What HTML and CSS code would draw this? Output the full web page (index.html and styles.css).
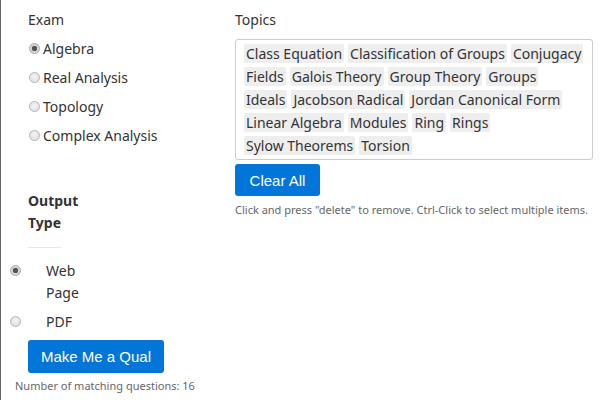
FILE: index.html
```html
<!DOCTYPE html>
<html>
<head>
<meta charset="utf-8">
<link rel="stylesheet" href="styles.css">
</head>
<body>
<div class="page">
  <div class="left">
    <div class="exam">
      <div class="label">Exam</div>
      <label class="radio-row"><input type="radio" name="exam" checked><span>Algebra</span></label>
      <label class="radio-row"><input type="radio" name="exam"><span>Real Analysis</span></label>
      <label class="radio-row"><input type="radio" name="exam"><span>Topology</span></label>
      <label class="radio-row"><input type="radio" name="exam"><span>Complex Analysis</span></label>
    </div>
    <div class="output">
      <div class="legend">Output Type</div>
      <hr class="rule">
      <label class="out-row"><input type="radio" name="out" checked><span class="out-text">Web Page</span></label>
      <label class="out-row"><input type="radio" name="out"><span class="out-text">PDF</span></label>
      <button class="btn btn-qual">Make Me a Qual</button>
      <div class="count">Number of matching questions: 16</div>
    </div>
  </div>
  <div class="right">
    <div class="label">Topics</div>
    <div class="tags">
      <span class="tag">Class Equation</span>
      <span class="tag">Classification of Groups</span>
      <span class="tag">Conjugacy</span>
      <span class="tag">Fields</span>
      <span class="tag">Galois Theory</span>
      <span class="tag">Group Theory</span>
      <span class="tag">Groups</span>
      <span class="tag">Ideals</span>
      <span class="tag">Jacobson Radical</span>
      <span class="tag">Jordan Canonical Form</span>
      <span class="tag">Linear Algebra</span>
      <span class="tag">Modules</span>
      <span class="tag">Ring</span>
      <span class="tag">Rings</span>
      <span class="tag">Sylow Theorems</span>
      <span class="tag">Torsion</span>
    </div>
    <button class="btn btn-clear">Clear All</button>
    <div class="help">Click and press "delete" to remove. Ctrl-Click to select multiple items.</div>
  </div>
</div>
</body>
</html>
```

FILE: styles.css
```css
* { box-sizing: border-box; }
html, body { margin: 0; padding: 0; }
body {
  font-family: "Noto Sans", sans-serif;
  font-size: 14px;
  color: #333;
  background: #fff;
}
.page {
  display: flex;
  min-height: 400px;
  border-left: 1px solid #666;
}
.left {
  width: 234px;
  flex: none;
}
.right {
  width: 358px;
  flex: none;
}
.label {
  line-height: 22px;
  height: 22px;
  margin-top: 9px;
}
.exam {
  padding-left: 27px;
}
.exam .label { margin-bottom: 3px; }
.radio-row {
  display: flex;
  align-items: center;
  height: 29px;
}
input[type=radio] {
  -webkit-appearance: none;
  appearance: none;
  width: 11px;
  height: 11px;
  margin: 0;
  border-radius: 50%;
  border: 1px solid #b4b4b4;
  background: radial-gradient(circle at 50% 40%, #f4f4f4 0%, #dcdcdc 100%);
  flex: none;
}
input[type=radio]:checked {
  background: radial-gradient(circle, #555 0, #555 2.5px, #d6d6d6 3px, #d6d6d6 100%);
  border-color: #a8a8a8;
}
.radio-row input { margin-left: 1px; margin-right: 3px; }
.output {
  margin-top: 40px;
}
.legend {
  font-weight: bold;
  line-height: 22px;
  width: 60px;
  margin-left: 27px;
}
.rule {
  border: 0;
  border-top: 1px solid #e8e8e8;
  width: 33px;
  margin: 13px 0 12px 27px;
}
.out-row {
  display: flex;
  align-items: flex-start;
  line-height: 22px;
  margin-bottom: 7px;
}
.out-row input { margin: 5px 0 0 9px; }
.out-text {
  width: 40px;
  margin-left: 25px;
}
.btn {
  display: block;
  border: 0;
  border-radius: 3px;
  background: #0275d8;
  color: #fff;
  font-family: "Liberation Sans", Arial, sans-serif;
  font-size: 15px;
  padding: 0;
  cursor: pointer;
}
.btn-qual {
  width: 136px;
  height: 33px;
  margin: 1px 0 0 27px;
}
.count {
  font-size: 11px;
  color: #666;
  margin: 6px 0 0 14px;
  line-height: 14px;
}
.tags {
  margin-top: 8px;
  border: 1px solid #ccc;
  border-radius: 3px;
  height: 121px;
  padding: 4px 8px;
  display: flex;
  flex-wrap: wrap;
  align-content: flex-start;
  gap: 4px 4px;
}
.tag {
  background: #eee;
  line-height: 19px;
  padding: 0 2px;
  border-radius: 2px;
}
.btn-clear {
  width: 85px;
  height: 32px;
  margin-top: 4px;
}
.help {
  font-size: 11px;
  color: #666;
  margin-top: 7px;
  line-height: 14px;
  white-space: nowrap;
}
```
